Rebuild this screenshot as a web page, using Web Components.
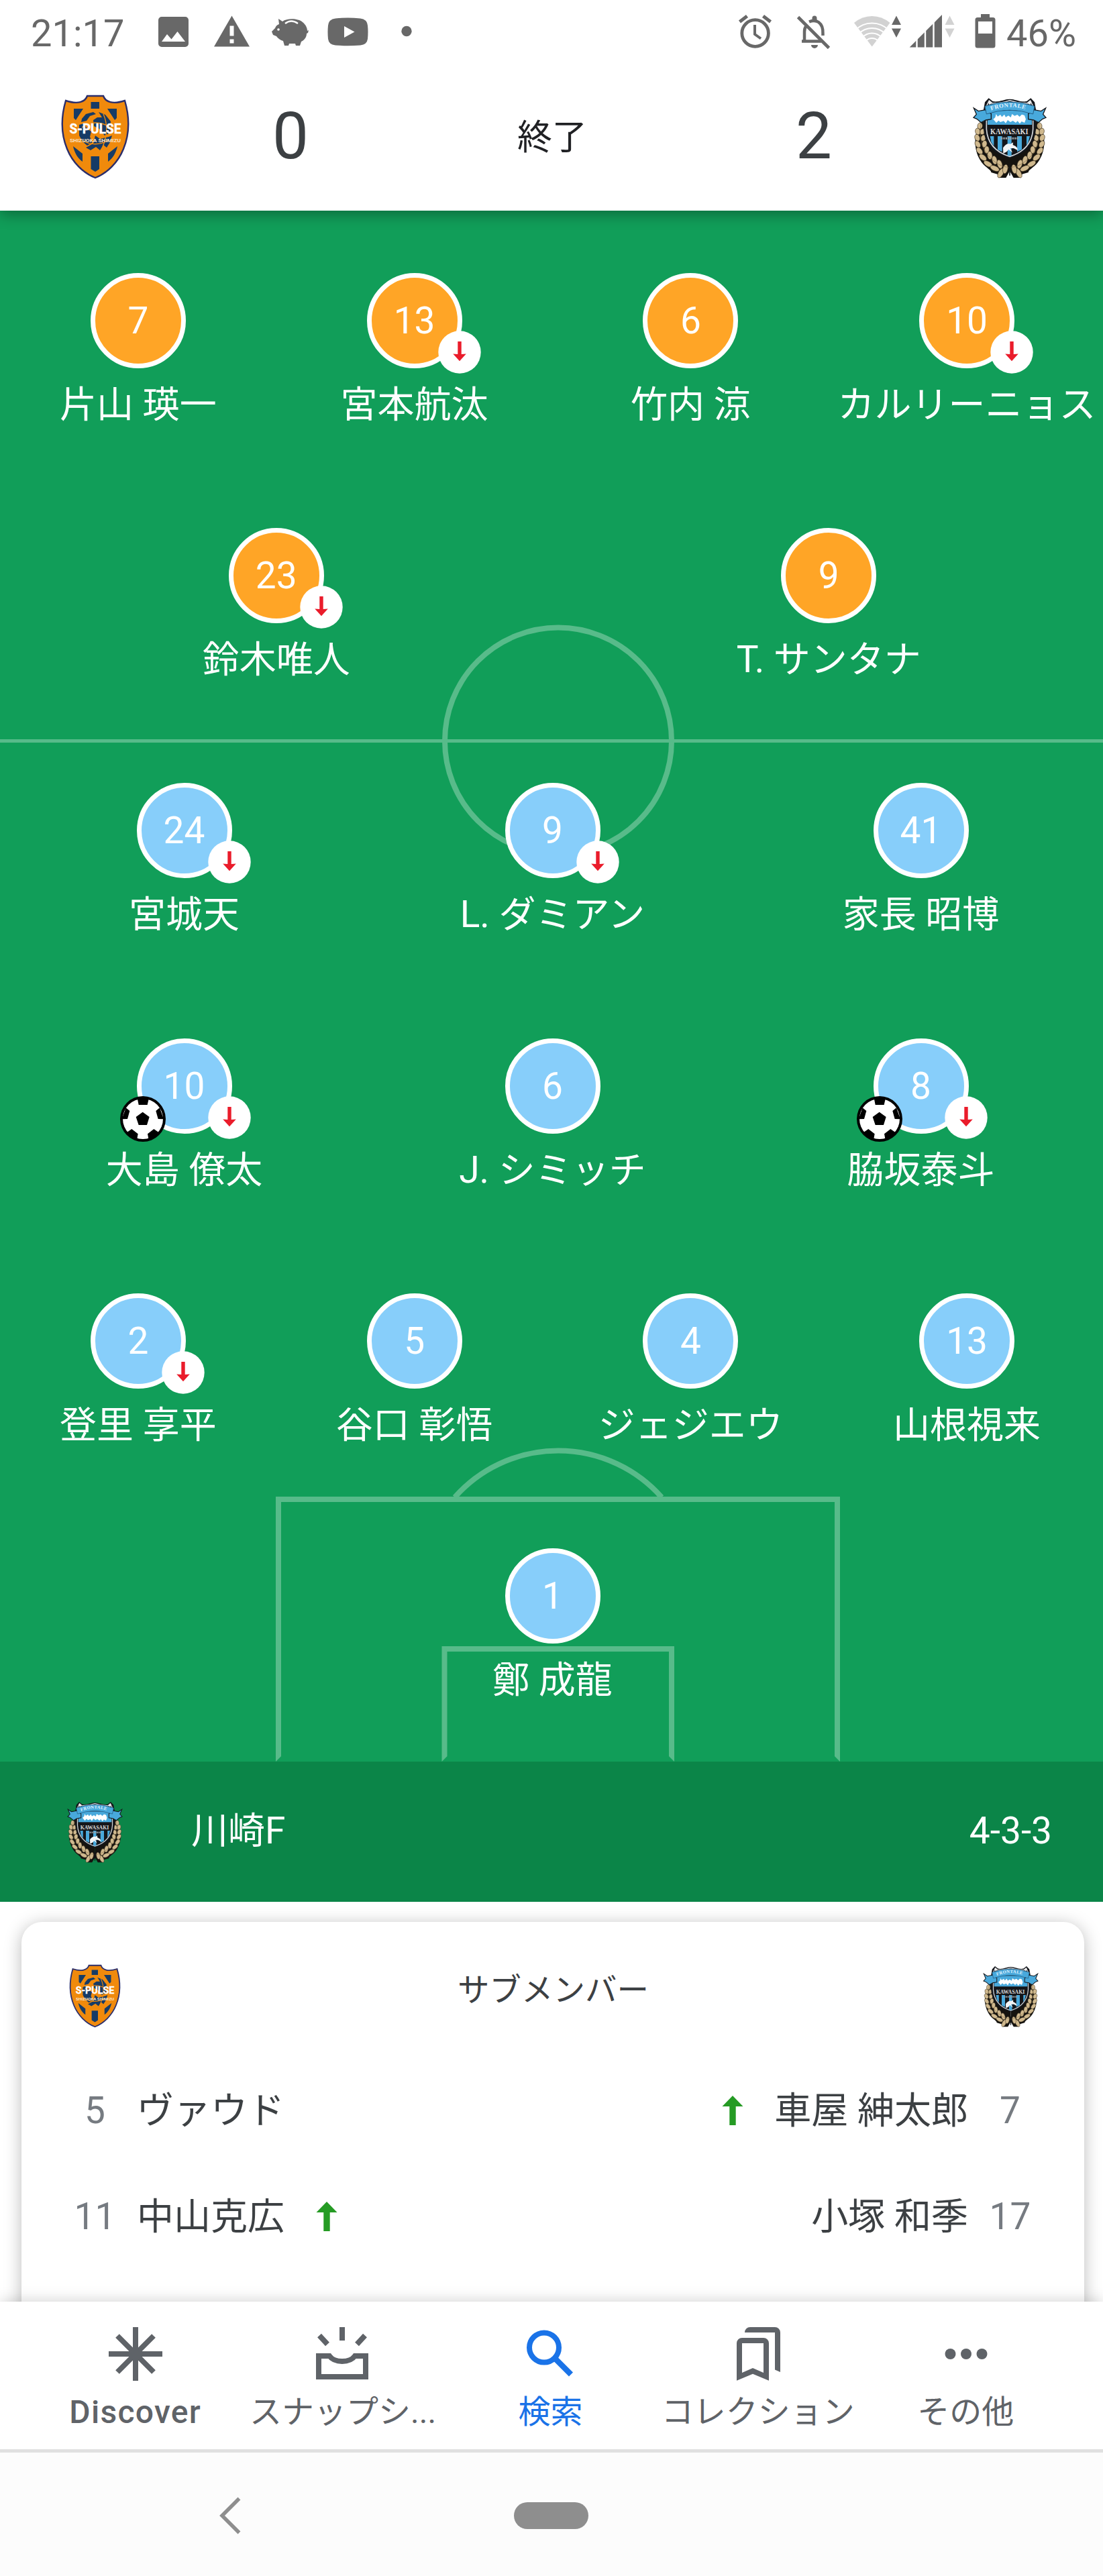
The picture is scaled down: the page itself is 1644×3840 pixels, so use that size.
<!DOCTYPE html>
<html lang="ja">
<head>
<meta charset="utf-8">
<title>清水 0 - 2 川崎F</title>
<style>
  body {
    margin: 0;
    width: 1644px;
    height: 3840px;
    overflow: hidden;
    display: flex;
    flex-direction: column;
    background: #fff;
    color: #3c4043;
    font-family: Roboto, "Noto Sans CJK JP", sans-serif;
  }
</style>
</head>
<body>
  <status-bar time="21:17" battery="46%"></status-bar>
  <score-header home="0" away="2">終了</score-header>

  <soccer-pitch>
    <player-row team="home">
      <pitch-player number="7">片山 瑛一</pitch-player>
      <pitch-player number="13" off>宮本航汰</pitch-player>
      <pitch-player number="6">竹内 涼</pitch-player>
      <pitch-player number="10" off>カルリーニョス</pitch-player>
    </player-row>
    <player-row team="home">
      <pitch-player number="23" off>鈴木唯人</pitch-player>
      <pitch-player number="9">T. サンタナ</pitch-player>
    </player-row>
    <player-row team="away">
      <pitch-player number="24" off>宮城天</pitch-player>
      <pitch-player number="9" off>L. ダミアン</pitch-player>
      <pitch-player number="41">家長 昭博</pitch-player>
    </player-row>
    <player-row team="away">
      <pitch-player number="10" off goal>大島 僚太</pitch-player>
      <pitch-player number="6">J. シミッチ</pitch-player>
      <pitch-player number="8" off goal>脇坂泰斗</pitch-player>
    </player-row>
    <player-row team="away">
      <pitch-player number="2" off>登里 享平</pitch-player>
      <pitch-player number="5">谷口 彰悟</pitch-player>
      <pitch-player number="4">ジェジエウ</pitch-player>
      <pitch-player number="13">山根視来</pitch-player>
    </player-row>
    <player-row team="away">
      <pitch-player number="1">鄭 成龍</pitch-player>
    </player-row>
  </soccer-pitch>

  <team-bar formation="4-3-3">川崎F</team-bar>

  <subs-card heading="サブメンバー">
    <sub-row>
      <sub-player number="5">ヴァウド</sub-player>
      <sub-player number="7" side="right" on>車屋 紳太郎</sub-player>
    </sub-row>
    <sub-row>
      <sub-player number="11" on>中山克広</sub-player>
      <sub-player number="17" side="right">小塚 和季</sub-player>
    </sub-row>
  </subs-card>

  <bottom-nav>
    <nav-item icon="discover" latin>Discover</nav-item>
    <nav-item icon="snapshot">スナップシ...</nav-item>
    <nav-item icon="search" active>検索</nav-item>
    <nav-item icon="collections">コレクション</nav-item>
    <nav-item icon="more">その他</nav-item>
  </bottom-nav>
  <system-nav></system-nav>

<script>
// shared helper: open shadow root filled with markup
function shadow(el, html) {
  el.attachShadow({ mode: 'open' }).innerHTML = html;
}

// components/team-crest.js

const S_PULSE = `
  <svg viewBox="0 0 100 124" preserveAspectRatio="none">
    <path d="M38 1H62C65 10 76 14 94 8C101 32 101 58 92 80C84 100 68 116 50 123C32 116 16 100 8 80C-1 58 -1 32 6 8C24 14 35 10 38 1Z" fill="#f08a0c" stroke="#2b2e6b" stroke-width="2.400"/>
    <g fill="#163b66">
      <path d="M43.500 10H56V20H43.500zM43.500 91H56V110L50 114L43.500 110z"/>
      <path d="M18 20H32L21 37L18 34zM82 20H68L79 37L82 34z"/>
      <path d="M17 76L31 87V99C24 94 19 86 17 76zM83 76L69 87V99C76 94 81 86 83 76z"/>
      <path d="M30 35L36 28L47 25L51 28L42 31L37 38L29 40zM55 25L65 29L73 39L72 56L64 60L56 50L48 46L47 37L53 33L60 33z"/>
      <path d="M26 44L33 42L38 50L44 54L42 62L46 70L38 75L31 69L26 60zM50 60L57 65L70 62L75 60L72 70L67 78L62 74L57 82L51 77L43 82L36 78L47 72z"/>
    </g>
    <g fill="none" stroke="#f08a0c" stroke-width="1.400"><path d="M30 48Q50 34 73 48M32 68Q50 78 70 67M62 28Q72 50 61 77"/></g>
    <text x="11.500" y="57" font-size="20" font-weight="700" fill="#fff" stroke="#fff" stroke-width=".4" textLength="77" lengthAdjust="spacingAndGlyphs" font-family="Roboto, sans-serif">S-PULSE</text>
    <text x="12" y="70" font-size="8" font-weight="700" fill="#fbe3c6" textLength="76" lengthAdjust="spacingAndGlyphs" font-family="Roboto, sans-serif">SHIZUOKA SHIMIZU</text>
  </svg>`;

// one half of the laurel: [x, y, rotation, length]
const LEAVES = [
  [62, 158, 8, 20], [52, 183, -12, 21], [73, 184, 28, 19], [50, 211, -22, 22], [77, 212, 20, 20],
  [52, 240, -30, 23], [82, 239, 12, 22], [60, 270, -40, 25], [92, 265, 4, 23], [75, 299, -50, 27],
  [106, 290, -6, 25], [98, 328, -60, 30], [127, 311, -14, 27], [128, 348, -66, 30], [150, 329, -18, 28],
  [155, 369, 28, 32], [175, 351, 12, 29]
];
const laurel = LEAVES.map(([x, y, r, l]) =>
  `<ellipse cx="${x}" cy="${y}" rx="11" ry="${(l * 0.72).toFixed(1)}" transform="rotate(${r} ${x} ${y})"/>`).join('');

const FRONTALE = `
  <svg viewBox="33 30 324 363" preserveAspectRatio="none">
    <defs><g id="half">
      <path d="M66 140C34 190 32 260 62 310C82 345 112 352 112 366L140 374L148 390H178L195 360V290L120 250L90 140Z" fill="#15130f"/>
      <g fill="#d0b98e" stroke="#3a2f1d" stroke-width="1.800">${laurel}</g>
      <path d="M66 150C58 205 68 265 112 305S180 340 190 344" fill="none" stroke="#7d6a45" stroke-width="2"/>
    </g></defs>
    <use href="#half"/><use href="#half" transform="translate(390 0) scale(-1 1)"/>
    <path d="M101 34L119 48C145 54 170 38 195 38S245 54 271 48L289 34L306 52L312 85V175C305 250 260 287 195 302C130 287 85 250 78 175V85L84 52Z" fill="#14161a"/>
    <path d="M91 70L103 45L117 57Q156 57 195 44Q234 57 273 57L287 45L299 70V172C295 240 252 277 195 295C138 277 95 240 91 172Z" fill="#14161a" stroke="#d3d7dc" stroke-width="5"/>
    <path d="M96 90H294V153H96z" fill="#48a9dc"/>
    <path d="M107 204H124V248L112 230zM141 204H161V274L141 264zM185 204H203V292H185zM228 204H249V264L228 274zM270 204H285L277 234L270 245z" fill="#48a9dc"/>
    <path d="M34 78L55 92L86 86L112 104V128L88 132L67 143L48 127L33 121L46 106zM356 78L335 92L304 86L278 104V128L302 132L323 143L342 127L357 121L344 106z" fill="#48a9dc" stroke="#14161a" stroke-width="4"/>
    <path d="M84 70Q195 32 306 70L299 105Q195 70 91 105Z" fill="#48a9dc" stroke="#245f87" stroke-width="3"/>
    <path d="M98 50L106 45L117 57L103 63zM292 50L284 45L273 57L287 63z" fill="#eee"/>
    <path id="arc" d="M112 89Q195 58 280 89" fill="none"/>
    <text font-size="26" font-weight="700" fill="#e7f5ff" textLength="155" font-family="Liberation Serif, serif"><textPath href="#arc">FRONTALE</textPath></text>
    <path d="M121 128L130 120L134 105L141 116L153 108L160 118L171 107L177 119L189 112L200 120L205 105L217 113L229 108L239 117L249 107L261 111L267 128L261 144L248 138L240 148L230 136L222 144L209 135L198 141L186 132L177 146L168 136L153 141L145 134L135 144Z" fill="#fff"/>
    <text x="108" y="194" font-size="36" font-weight="700" fill="#ddd" textLength="170" lengthAdjust="spacingAndGlyphs" font-family="Liberation Serif, serif">KAWASAKI</text>
    <path d="M156 214H236" stroke="#9aa2a8" stroke-width="9" stroke-dasharray="7 3"/>
    <path d="M166 281L165 256C175 240 187 235 198 239L210 232L209 243C227 250 231 258 230 267L213 258L197 258L208 278L190 263L181 274Z" fill="#f3f5f6"/>
    <path d="M195 330V380" stroke="#14161a" stroke-width="5"/>
  </svg>`;

class TeamCrest extends HTMLElement {
  connectedCallback() {
    const home = this.getAttribute('team') === 'home';
    const small = this.hasAttribute('small');
    const [w, h] = home ? (small ? [75, 93] : [100, 124]) : (small ? [81, 92] : [108, 121]);
    shadow(this, `
      <style>
        :host { display: block; width: ${w}px; height: ${h}px; }
        svg { display: block; width: 100%; height: 100%; overflow: visible; }
      </style>
      ${home ? S_PULSE : FRONTALE}`);
  }
}
customElements.define('team-crest', TeamCrest);

// components/status-bar.js

class StatusBar extends HTMLElement {
  connectedCallback() {
    shadow(this, `
      <style>
        :host {
          display: flex;
          flex: none;
          height: 94px;
          align-items: center;
          font-size: 56px;
          line-height: 66px;
          color: #686868;
        }
        div { display: flex; align-items: center; }
        .left { width: 1054px; padding-left: 46px; }
        .time { width: 190px; }
        span { padding-top: 6px; }
        svg { display: block; height: 52px; flex: none; fill: #686868; }
        .pct { margin-left: 16px; }
      </style>
      <div class="left">
        <span class="time">${this.getAttribute('time')}</span>
        <svg viewBox="236 21 45 52" width="45"><path fill-rule="evenodd" d="M241 25H276a5 5 0 0 1 5 5V65a5 5 0 0 1-5 5H241a5 5 0 0 1-5-5V30a5 5 0 0 1 5-5zM241 62H276L264.500 47L255.500 58.500L249 51z"/></svg>
        <svg viewBox="319 21 53 52" width="53" style="margin-left:38px"><path fill-rule="evenodd" d="M345.500 23.500L372 69.500H319zM342.500 38.500V53.500H348.500V38.500zM342.500 58.500V64.500H348.500V58.500z"/></svg>
        <svg viewBox="405 21 55 52" width="55" style="margin-left:33px"><path d="M415 28L421 32C428 27 444 27 451 33C456 37 458 42 458 46L460 45L459 49L457 50C457 56 453 60 449 62L447 68H441L440 65H431L430 68H424L422 61C418 60 414 57 412 54L407 52L405 47L410 42C411 39 413 37 416 36Z"/><path d="M425 35Q434 28 444 35" stroke="#fff" stroke-width="2.500" fill="none"/><circle cx="415" cy="44" r="1.800" fill="#fff"/></svg>
        <svg viewBox="488 21 61 52" width="61" style="margin-left:28px"><path fill-rule="evenodd" d="M500 27.500Q518.500 25.500 537 27.500Q547 28.500 548 38Q549 47.500 548 58Q547 66.500 537 67.500Q518.500 69 500 67.500Q490 66.500 489 58Q488 47.500 489 38Q490 28.500 500 27.500zM513 39V56L528.500 47.500z"/></svg>
        <svg viewBox="598 21 16 52" width="16" style="margin-left:49px"><circle cx="606" cy="46.500" r="7.700"/></svg>
      </div>
      <div>
        <svg viewBox="1100 21 51 52" width="51"><g fill="none" stroke="#686868"><circle cx="1125.600" cy="49.500" r="19.800" stroke-width="4.800"/><path d="M1102.500 32.500L1113.500 24M1148.500 32.500L1137.500 24" stroke-width="5"/><path d="M1125 37V51L1134 57.500" stroke-width="4"/></g></svg>
        <svg viewBox="1187 21 51 52" width="51" style="margin-left:36px"><g fill="none" stroke="#686868" stroke-width="4.500"><path d="M1189.500 25.500L1235.500 71.500" stroke-width="4.800"/><path d="M1195 61.500H1224M1199 61V47Q1199 42 1201.500 39M1206 32.500Q1214 29 1220 33Q1227 38 1226.500 50V53"/></g><path d="M1210.500 31V27a3.500 3.500 0 0 1 7 0V31zM1209 67H1219a5 5 0 0 1-10 0z"/></svg>
        <svg viewBox="1272 21 72 52" width="72" style="margin-left:34px"><path d="M1299.700 69.500L1273 34Q1285 24 1299.700 24T1326.500 34z" fill="#d2d2d2"/><g fill="none" stroke="#fff" stroke-width="1.800"><circle cx="1299.700" cy="69.500" r="35"/><circle cx="1299.700" cy="69.500" r="27.500"/><circle cx="1299.700" cy="69.500" r="20"/><circle cx="1299.700" cy="69.500" r="12.500"/></g><path d="M1329 37L1336 23.500L1343 37zM1329 42.500L1336 56L1343 42.500z"/></svg>
        <svg viewBox="1355 21 68 52" width="68" style="margin-left:11px"><path d="M1355.700 70.500L1404 22V70.500z"/><path d="M1366.500 21V72M1379 21V72M1391.500 21V72" stroke="#fff" stroke-width="2.400"/><path d="M1408.500 37L1415.500 23.500L1422.500 37zM1408.500 42.500L1415.500 56L1422.500 42.500z" fill="#d2d2d2"/></svg>
        <svg viewBox="1453 21 31 52" width="31" style="margin-left:30px"><path fill-rule="evenodd" d="M1462 21H1475V26H1480a3.500 3.500 0 0 1 3.500 3.500V68a3.500 3.500 0 0 1-3.500 3.500H1457a3.500 3.500 0 0 1-3.500-3.500V29.500a3.500 3.500 0 0 1 3.500-3.500H1462zM1458 32V50H1479V32z"/></svg>
        <span class="pct">${this.getAttribute('battery')}</span>
      </div>`);
  }
}
customElements.define('status-bar', StatusBar);

// components/score-header.js

class ScoreHeader extends HTMLElement {
  connectedCallback() {
    shadow(this, `
      <style>
        :host {
          display: grid;
          flex: none;
          grid-template-columns: 283px 300px 478px 300px 283px;
          align-items: center;
          justify-items: center;
          height: 220px;
          position: relative;
          z-index: 1;
          background: #fff;
          box-shadow: 0 6px 20px rgba(0, 0, 0, .32);
          /* keeps the shadow off the status bar */
          clip-path: inset(0 0 -50px 0);
        }
        .score { font-size: 96px; line-height: 120px; margin-top: -3px; }
        .state { font-size: 52px; line-height: 70px; margin: 4px 0 0 2px; color: #202124; }
        .away { margin-left: 4px; }
        .crest { margin: 3px 0 0 5px; }
      </style>
      <team-crest team="home"></team-crest>
      <div class="score">${this.getAttribute('home')}</div>
      <div class="state"><slot></slot></div>
      <div class="score away">${this.getAttribute('away')}</div>
      <team-crest team="away" class="crest"></team-crest>`);
  }
}
customElements.define('score-header', ScoreHeader);

// components/soccer-pitch.js

class SoccerPitch extends HTMLElement {
  connectedCallback() {
    shadow(this, `
      <style>
        :host {
          display: block;
          flex: none;
          position: relative;
          box-sizing: border-box;
          height: 2312px;
          padding-top: 93px;
          background: #119e59;
          overflow: hidden;
        }
        /* field markings lie under the players */
        svg { position: absolute; inset: 0; width: 1644px; height: 2312px; }
        .rows {
          position: relative;
          display: grid;
          grid-auto-rows: 380.2px;
          width: 1647px;
        }
      </style>
      <svg viewBox="0 314 1644 2312" fill="none" stroke="#58bb8a" stroke-width="8">
        <path d="M0 1104.500H1644" stroke-width="5"/>
        <circle cx="832" cy="1104.500" r="169"/>
        <path d="M677.800 2232A206 206 0 0 1 986.200 2232"/>
        <path d="M411 2231H1252V2626L1244 2618V2239H419V2618L411 2626zM658.500 2454H1005V2626L997 2618V2462H666.500V2618L658.500 2626z" fill="#58bb8a" stroke="none"/>
      </svg>
      <div class="rows"><slot></slot></div>`);
  }
}
customElements.define('soccer-pitch', SoccerPitch);

class PlayerRow extends HTMLElement {
  connectedCallback() {
    const fill = this.getAttribute('team') === 'home' ? '#ffa526' : '#87cefa';
    shadow(this, `
      <style>
        :host {
          display: grid;
          grid-auto-flow: column;
          grid-auto-columns: minmax(0, 1fr);
          --shirt: ${fill};
        }
      </style>
      <slot></slot>`);
  }
}
customElements.define('player-row', PlayerRow);

// components/pitch-player.js

const SUB_OFF = `
  <svg class="off" viewBox="0 0 64 64"><circle cx="32" cy="32" r="31.700" fill="#fff"/>
    <path d="M29.300 16H34.700V35L41.800 34.500L32 45.300L22.200 34.500L29.300 35z" fill="#ea1c2b"/></svg>`;

const BALL = `
  <svg class="ball" viewBox="178 402 204 204"><circle cx="280" cy="504" r="102"/>
    <circle cx="280" cy="504" r="90" fill="#fff"/>
    <path d="M279 473L309 495L298 531H261L249 495zM255 410L261 441H300L307 410zM204 454L221 468L211 504L186 505zM355 454L338 468L348 504L373 505zM204 567L230 549L258 571L253 598zM355 567L329 549L301 571L306 598z"/></svg>`;

class PitchPlayer extends HTMLElement {
  connectedCallback() {
    shadow(this, `
      <style>
        :host {
          display: flex;
          flex-direction: column;
          align-items: center;
          color: #fff;
          font-size: 55px;
        }
        .shirt {
          position: relative;
          box-sizing: border-box;
          width: 142px;
          height: 142px;
          border: 7px solid #fff;
          border-radius: 50%;
          background: var(--shirt);
          line-height: 128px;
          text-align: center;
        }
        .off, .ball { position: absolute; display: block; }
        .off { width: 64px; height: 64px; left: 99px; top: 79px; }
        .ball { width: 68px; height: 68px; left: -32px; top: 79px; }
        .name { margin-top: 14px; line-height: 80px; white-space: nowrap; }
      </style>
      <div class="shirt">${this.getAttribute('number')}
        ${this.hasAttribute('goal') ? BALL : ''}
        ${this.hasAttribute('off') ? SUB_OFF : ''}
      </div>
      <div class="name"><slot></slot></div>`);
  }
}
customElements.define('pitch-player', PitchPlayer);

// components/team-bar.js

class TeamBar extends HTMLElement {
  connectedCallback() {
    shadow(this, `
      <style>
        :host {
          display: flex;
          flex: none;
          align-items: center;
          box-sizing: border-box;
          height: 209px;
          padding: 0 76px 0 101px;
          background: #0b8548;
          color: #fff;
          font-size: 55px;
          line-height: 72px;
        }
        span { padding-bottom: 3px; }
        .name { flex: 1; margin-left: 103px; }
      </style>
      <team-crest team="away" small></team-crest>
      <span class="name"><slot></slot></span>
      <span>${this.getAttribute('formation')}</span>`);
  }
}
customElements.define('team-bar', TeamBar);

// components/subs-card.js

class SubsCard extends HTMLElement {
  connectedCallback() {
    shadow(this, `
      <style>
        :host {
          display: block;
          flex: none;
          box-sizing: border-box;
          height: 596px;
          padding: 30px 28px 0 32px;
          overflow: hidden;
        }
        .card {
          box-sizing: border-box;
          height: 700px;
          padding: 64px 69px 0 72px;
          border-radius: 31px;
          background: #fff;
          box-shadow: 0 4px 26px rgba(0, 0, 0, .27);
        }
        header {
          display: flex;
          align-items: center;
          justify-content: space-between;
          height: 93px;
          margin-bottom: 45px;
        }
        h2 {
          margin: 0 0 18px 4px;
          font-size: 47.500px;
          font-weight: 400;
          line-height: 60px;
        }
      </style>
      <div class="card">
        <header>
          <team-crest team="home" small></team-crest>
          <h2>${this.getAttribute('heading')}</h2>
          <team-crest team="away" small></team-crest>
        </header>
        <slot></slot>
      </div>`);
  }
}
customElements.define('subs-card', SubsCard);

class SubRow extends HTMLElement {
  connectedCallback() {
    shadow(this, `
      <style>
        :host {
          display: flex;
          align-items: center;
          justify-content: space-between;
          height: 157.700px;
          padding-right: 4px;
        }
      </style>
      <slot></slot>`);
  }
}
customElements.define('sub-row', SubRow);

class SubPlayer extends HTMLElement {
  connectedCallback() {
    const right = this.getAttribute('side') === 'right';
    shadow(this, `
      <style>
        :host {
          display: flex;
          flex-direction: ${right ? 'row-reverse' : 'row'};
          align-items: center;
          font-size: 55px;
          line-height: 80px;
        }
        .number { width: 75px; text-align: center; color: #767b81; }
        .name { margin: 0 ${right ? '25px 0 46px' : '47px 0 25px'}; }
        svg { display: block; width: 32px; height: 44px; }
      </style>
      <span class="number">${this.getAttribute('number')}</span>
      <span class="name"><slot></slot></span>
      ${this.hasAttribute('on') ? '<svg viewBox="0 0 32 44"><path d="M16 0L31.500 16H20.700V44H11.300V16H.5z" fill="#259b24"/></svg>' : ''}`);
  }
}
customElements.define('sub-player', SubPlayer);

// components/bottom-nav.js

class BottomNav extends HTMLElement {
  connectedCallback() {
    shadow(this, `
      <style>
        :host {
          display: grid;
          flex: none;
          grid-template-columns: repeat(5, 309.400px);
          box-sizing: border-box;
          height: 225px;
          padding: 38px 0 0 47px;
          border-bottom: 5px solid #e0e0e0;
          background: #fff;
          position: relative;
          box-shadow: 0 -2px 20px rgba(0, 0, 0, .17);
        }
      </style>
      <slot></slot>`);
  }
}
customElements.define('bottom-nav', BottomNav);

// icons are drawn around their centre
const NAV_ICONS = {
  discover: '<path class="line" d="M0-40V40M-40 0H40M-27-27L27 27M27-27L-27 27"/>',
  snapshot: '<path class="line" d="M-1-40V-20M-35-27.500L-23-14.500M33-27.500L21-14.500M-36 3H-20C-16 8.500-9 11-1 11S14 8.500 18 3H34V34H-36z"/>',
  search: '<circle class="line" cx="-9" cy="-9.500" r="22"/><path class="line" style="stroke-width:8.500" d="M7 6.500L31 30.500"/>',
  collections: '<path fill-rule="evenodd" d="M-32 39.700V-16a8 8 0 0 1 8-8H8a8 8 0 0 1 8 8V39.700L-8 29.700zM-24-16V28L-8 21L8 28V-16z"/><path d="M-20-32a8 8 0 0 1 8-8H25a8 8 0 0 1 8 8V27L25 23.500V-32z"/>',
  more: '<circle cx="-22.500" r="8"/><circle cx="1" r="8"/><circle cx="24.500" r="8"/>'
};

class NavItem extends HTMLElement {
  connectedCallback() {
    const color = this.hasAttribute('active') ? '#1a73e8' : '#5f6368';
    shadow(this, `
      <style>
        :host {
          display: flex;
          flex-direction: column;
          align-items: center;
          color: ${color};
        }
        svg { display: block; width: 80px; height: 80px; fill: currentColor; }
        .line { fill: none; stroke: currentColor; stroke-width: 8; }
        span {
          margin-top: 11px;
          font-size: 48px;
          line-height: 72px;
          white-space: nowrap;
          ${this.hasAttribute('latin') ? 'font-weight: 500; letter-spacing: 1.3px;' : ''}
        }
      </style>
      <svg viewBox="-40 -40 80 80">${NAV_ICONS[this.getAttribute('icon')]}</svg>
      <span><slot></slot></span>`);
  }
}
customElements.define('nav-item', NavItem);

// components/system-nav.js

class SystemNav extends HTMLElement {
  connectedCallback() {
    shadow(this, `
      <style>
        :host {
          display: flex;
          flex: 1;
          align-items: center;
          padding: 4px 0 0 327px;
          background: #fcfcfc;
          position: relative;
        }
        svg { display: block; width: 32px; height: 56px; }
        .home {
          width: 111px;
          height: 40px;
          margin-left: 407px;
          border-radius: 20px;
          background: #8e8e8e;
        }
      </style>
      <svg viewBox="0 0 32 56"><path d="M29.500 2.500L4 28L29.500 53.500" fill="none" stroke="#8e8e8e" stroke-width="5.500"/></svg>
      <div class="home"></div>`);
  }
}
customElements.define('system-nav', SystemNav);
</script>
</body>
</html>
